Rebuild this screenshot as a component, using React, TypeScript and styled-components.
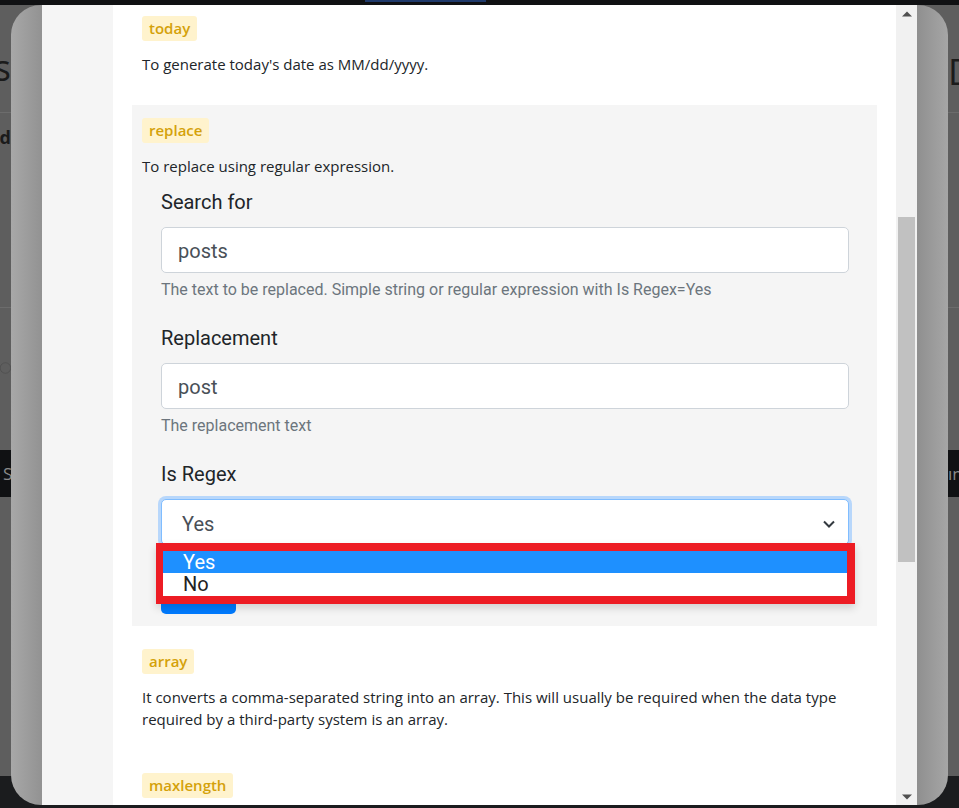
import React from 'react'
import styled, { createGlobalStyle } from 'styled-components'

const GlobalStyle = createGlobalStyle`
  html, body {
    margin: 0;
    padding: 0;
  }
  body {
    width: 959px;
    height: 808px;
    overflow: hidden;
    background: #5e5e5e;
  }
  * {
    box-sizing: border-box;
  }
`

const Screen = styled.div`
  position: relative;
  width: 959px;
  height: 808px;
  overflow: hidden;
  background: #5e5e5e;
  font-family: 'Open Sans', 'Liberation Sans', sans-serif;
`

/* dimmed page behind the modal */

const Backdrop = styled.div`
  display: flex;
  flex-direction: column;
  height: 100%;
`

const TopNav = styled.div`
  height: 5px;
  flex: none;
  background: #101113;
  padding-left: 365px;
`

const NavIndicator = styled.div`
  width: 121px;
  height: 2px;
  background: #1f3a6b;
`

const BackRow = styled.div<{ h: number; dark?: boolean; line?: boolean }>`
  height: ${p => p.h}px;
  flex: none;
  display: flex;
  justify-content: space-between;
  align-items: ${p => (p.dark ? 'center' : 'flex-start')};
  background: ${p => (p.dark ? '#101113' : 'transparent')};
  border-bottom: ${p => (p.line ? '1px solid #6c6c6c' : 'none')};
`

const Edge = styled.div<{ align: 'start' | 'end'; pad?: number; inset?: number }>`
  width: 11px;
  overflow: hidden;
  display: flex;
  justify-content: ${p => (p.align === 'end' ? 'flex-end' : 'flex-start')};
  padding-top: ${p => p.pad ?? 0}px;
  padding-left: ${p => p.inset ?? 0}px;
  white-space: nowrap;
`

const BackTitle = styled.span`
  font-family: 'Open Sans', sans-serif;
  font-size: 36px;
  line-height: 40px;
  color: #1b1b1b;
`

const BackStrong = styled.span`
  font-family: 'Open Sans', sans-serif;
  font-size: 18px;
  font-weight: 700;
  color: #1b1b1b;
`

const BackTab = styled.span`
  font-family: 'Open Sans', sans-serif;
  font-size: 17px;
  color: #8a8a8a;
`

const BackFill = styled.div`
  flex: 1;
`

const BackFooter = styled.div`
  height: 32px;
  flex: none;
  background: #1b1c1e;
`

/* modal */

const Modal = styled.div`
  position: absolute;
  top: 5px;
  left: 11px;
  width: 937px;
  height: 800px;
  border-radius: 30px;
  padding: 0 31px;
  display: flex;
  overflow: hidden;
  background: linear-gradient(
    to right,
    #a8a8a8 0px,
    #929292 31px,
    #8f8f8f calc(100% - 31px),
    #a6a6a6 100%
  );
`

const ModalBody = styled.div`
  flex: 1;
  display: flex;
  background: #f5f5f5;
`

const Gutter = styled.div`
  width: 71px;
  flex: none;
`

const Content = styled.div`
  flex: 1;
  background: #fff;
  padding: 0 19px;
  overflow: hidden;
`

const ScrollInner = styled.div`
  margin-top: -2px;
`

const Section = styled.div<{ shaded?: boolean }>`
  padding: 13px 10px 12px;
  margin-bottom: 10px;
  background: ${p => (p.shaded ? '#f5f5f5' : 'transparent')};
`

const Badge = styled.span`
  display: inline-block;
  height: 25px;
  line-height: 25px;
  padding: 0 7px;
  border-radius: 3px;
  background: #fff3cd;
  color: #d4a10a;
  font-family: 'Open Sans', sans-serif;
  font-size: 15px;
  font-weight: 600;
`

const Desc = styled.p`
  margin: 12px 0 8px;
  font-family: 'Open Sans', sans-serif;
  font-size: 15px;
  line-height: 22px;
  color: #212529;
`

const Form = styled.div`
  padding: 0 18px 0 19px;
  font-family: Roboto, 'Liberation Sans', sans-serif;
`

const FormGroup = styled.div`
  margin-bottom: 19px;
`

const Label = styled.div`
  font-size: 20px;
  line-height: 34px;
  color: #212529;
  margin-bottom: 8px;
`

const Input = styled.div`
  height: 46px;
  border: 1px solid #ced4da;
  border-radius: 5px;
  background: #fff;
  padding: 2px 0 0 16px;
  display: flex;
  align-items: center;
  font-size: 20px;
  color: #495057;
`

const Help = styled.div`
  margin-top: 5px;
  font-size: 16px;
  line-height: 24px;
  color: #6c757d;
`

const SelectWrap = styled.div`
  position: relative;
`

const Select = styled.div`
  height: 46px;
  border: 1px solid #80bdff;
  border-radius: 5px;
  background: #fff;
  box-shadow: 0 0 0 3px #b8d7fb;
  padding: 3px 12px 0 20px;
  display: flex;
  align-items: center;
  justify-content: space-between;
  font-size: 20px;
  color: #495057;
`

const Dropdown = styled.div`
  position: absolute;
  left: -5px;
  top: 44px;
  width: 699px;
  border-style: solid;
  border-color: #ed1c24;
  border-width: 8px 8px 8px 7px;
  background: #fff;
  box-shadow: 0 4px 8px rgba(0, 0, 0, 0.15);
  z-index: 2;
`

const Option = styled.div<{ active?: boolean }>`
  height: ${p => (p.active ? 22 : 23)}px;
  line-height: ${p => (p.active ? 22 : 23)}px;
  padding-left: 20px;
  font-size: 20px;
  background: ${p => (p.active ? '#1e90ff' : '#fff')};
  color: ${p => (p.active ? '#fff' : '#222')};
`

const SaveButton = styled.button`
  display: block;
  margin-top: 25px;
  width: 75px;
  height: 44px;
  border: none;
  border-radius: 5px;
  background: #007bff;
`

/* scrollbar */

const Scrollbar = styled.div`
  width: 21px;
  flex: none;
  background: #f1f1f1;
  display: flex;
  flex-direction: column;
`

const Arrow = styled.div`
  height: 17px;
  flex: none;
  display: flex;
  align-items: center;
  justify-content: center;
`

const Track = styled.div`
  flex: 1;
  padding: 195px 2px 0;
`

const Thumb = styled.div`
  height: 345px;
  background: #c1c1c1;
`

const Chevron = () => (
  <svg width="14" height="10" viewBox="0 0 14 10">
    <polyline points="2,2.5 7,7.5 12,2.5" fill="none" stroke="#343a40" strokeWidth="2" />
  </svg>
)

const Tri = ({ up }: { up?: boolean }) => (
  <svg width="10" height="6" viewBox="0 0 10 6">
    <polygon points={up ? '0,5.5 5,0.5 10,5.5' : '0,0.5 5,5.5 10,0.5'} fill="#505050" />
  </svg>
)

export default function App() {
  return (
    <Screen>
      <GlobalStyle />
      <Backdrop>
        <TopNav>
          <NavIndicator />
        </TopNav>
        <BackRow h={108} line>
          <Edge align="end" pad={43}>
            <BackTitle>Fields</BackTitle>
          </Edge>
          <Edge align="start" pad={47}>
            <BackTitle>Data</BackTitle>
          </Edge>
        </BackRow>
        <BackRow h={195} line>
          <Edge align="end" pad={12}>
            <BackStrong>Field</BackStrong>
          </Edge>
        </BackRow>
        <BackRow h={142}>
          <Edge align="start" pad={24}>
            <svg width="140" height="72" viewBox="0 0 140 72">
              <circle cx="69" cy="36" r="67" fill="none" stroke="#2b2b2b" strokeWidth="3" />
            </svg>
          </Edge>
        </BackRow>
        <BackRow h={47} dark>
          <Edge align="start" inset={3}>
            <BackTab>Status</BackTab>
          </Edge>
          <Edge align="start">
            <BackTab>ın</BackTab>
          </Edge>
        </BackRow>
        <BackFill />
        <BackFooter />
      </Backdrop>

      <Modal>
        <ModalBody>
          <Gutter />
          <Content>
            <ScrollInner>
              <Section>
                <Badge>today</Badge>
                <Desc>To generate today's date as MM/dd/yyyy.</Desc>
              </Section>

              <Section shaded>
                <Badge>replace</Badge>
                <Desc>To replace using regular expression.</Desc>
                <Form>
                  <FormGroup>
                    <Label>Search for</Label>
                    <Input>posts</Input>
                    <Help>The text to be replaced. Simple string or regular expression with Is Regex=Yes</Help>
                  </FormGroup>
                  <FormGroup>
                    <Label>Replacement</Label>
                    <Input>post</Input>
                    <Help>The replacement text</Help>
                  </FormGroup>
                  <Label>Is Regex</Label>
                  <SelectWrap>
                    <Select>
                      <span>Yes</span>
                      <Chevron />
                    </Select>
                    <Dropdown>
                      <Option active>Yes</Option>
                      <Option>No</Option>
                    </Dropdown>
                  </SelectWrap>
                  <SaveButton aria-label="Save" />
                </Form>
              </Section>

              <Section>
                <Badge>array</Badge>
                <Desc>
                  It converts a comma-separated string into an array. This will usually be required when the data type
                  required by a third-party system is an array.
                </Desc>
              </Section>

              <Section>
                <Badge>maxlength</Badge>
                <Desc>To limit the maximum number of characters.</Desc>
              </Section>
            </ScrollInner>
          </Content>
          <Scrollbar>
            <Arrow>
              <Tri up />
            </Arrow>
            <Track>
              <Thumb />
            </Track>
            <Arrow>
              <Tri />
            </Arrow>
          </Scrollbar>
        </ModalBody>
      </Modal>
    </Screen>
  )
}
